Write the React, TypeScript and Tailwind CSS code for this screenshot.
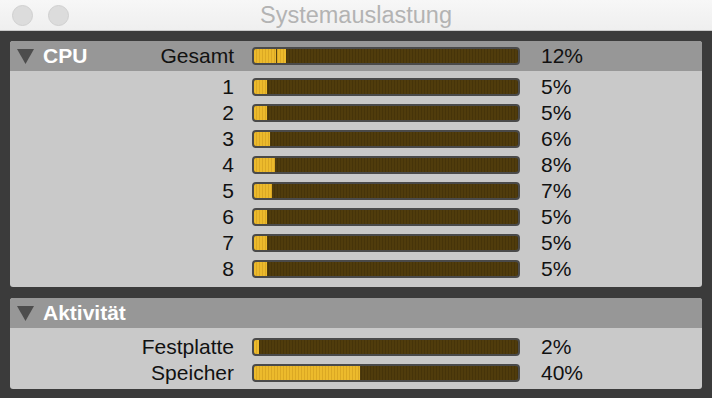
import React from "react";

const cpuRows = [
  { label: "1", value: 5 },
  { label: "2", value: 5 },
  { label: "3", value: 6 },
  { label: "4", value: 8 },
  { label: "5", value: 7 },
  { label: "6", value: 5 },
  { label: "7", value: 5 },
  { label: "8", value: 5 },
];

const activityRows = [
  { label: "Festplatte", value: 2 },
  { label: "Speicher", value: 40 },
];

const Bar = ({ value, split }: { value: number; split?: number }) => {
  const fill = Math.max(3, Math.round((value * 264) / 100));
  return (
    <div className="relative w-[268px] h-[18px] rounded-[4px] border-2 border-[#4a4a4a] overflow-hidden bg-[repeating-linear-gradient(90deg,#503c0c_0px,#503c0c_2px,#46340a_2px,#46340a_3px)]">
      <div
        className="absolute left-0 top-0 bottom-0 bg-[repeating-linear-gradient(90deg,#ecba2c_0px,#ecba2c_2px,#dba824_2px,#dba824_3px)]"
        style={{ width: fill }}
      />
      {split !== undefined && (
        <div
          className="absolute top-0 bottom-0 w-[1px] bg-[#5a450f]"
          style={{ left: split }}
        />
      )}
    </div>
  );
};

const Triangle = () => (
  <svg width="17" height="15" viewBox="0 0 17 15" className="shrink-0">
    <polygon points="0,0 17,0 8.5,15" fill="#4d4d4d" />
  </svg>
);

const Row = ({ label, value }: { label: string; value: number }) => (
  <div className="flex items-center h-[26px]">
    <div className="w-[224px] text-right">{label}</div>
    <div className="ml-[18px]">
      <Bar value={value} />
    </div>
    <div className="ml-[21px]">{value}%</div>
  </div>
);

const Header = ({
  title,
  label,
  value,
  split,
}: {
  title: string;
  label?: string;
  value?: number;
  split?: number;
}) => (
  <div className="flex items-center h-[30px] bg-[#979797] rounded-t-[3px]">
    <div className="w-[224px] flex items-center pl-[7px]">
      <Triangle />
      <span className="ml-[9px] font-bold text-white">{title}</span>
      {label && <span className="ml-auto">{label}</span>}
    </div>
    {value !== undefined && (
      <>
        <div className="ml-[18px]">
          <Bar value={value} split={split} />
        </div>
        <div className="ml-[21px]">{value}%</div>
      </>
    )}
  </div>
);

export default function App() {
  return (
    <div className="w-[712px] h-[398px] bg-[#3b3b3b] flex flex-col font-['Liberation_Sans',Arial,sans-serif] text-[21px] text-[#111] overflow-hidden">
      <div className="relative h-[31px] shrink-0 bg-gradient-to-b from-[#f7f7f7] to-[#efefef] border-b border-[#c9c9c9] flex items-center justify-center">
        <div className="absolute left-[12px] top-[5px] w-[21px] h-[21px] rounded-full bg-[#dcdcdc] border border-[#d0d0d0]" />
        <div className="absolute left-[48px] top-[5px] w-[21px] h-[21px] rounded-full bg-[#dcdcdc] border border-[#d0d0d0]" />
        <span className="text-[23.5px] text-[#b3b3b3] leading-none mt-[1px]">Systemauslastung</span>
      </div>

      <div className="px-[10px] pt-[10px] flex flex-col gap-[11px]">
        <div className="rounded-[3px] bg-[#c9c9c9]">
          <Header title="CPU" label="Gesamt" value={12} split={22} />
          <div className="pt-[3px] pb-[5px]">
            {cpuRows.map((r) => (
              <Row key={r.label} label={r.label} value={r.value} />
            ))}
          </div>
        </div>

        <div className="rounded-[3px] bg-[#c9c9c9]">
          <Header title="Aktivität" />
          <div className="pt-[6px] pb-[3px]">
            {activityRows.map((r) => (
              <Row key={r.label} label={r.label} value={r.value} />
            ))}
          </div>
        </div>
      </div>
    </div>
  );
}
